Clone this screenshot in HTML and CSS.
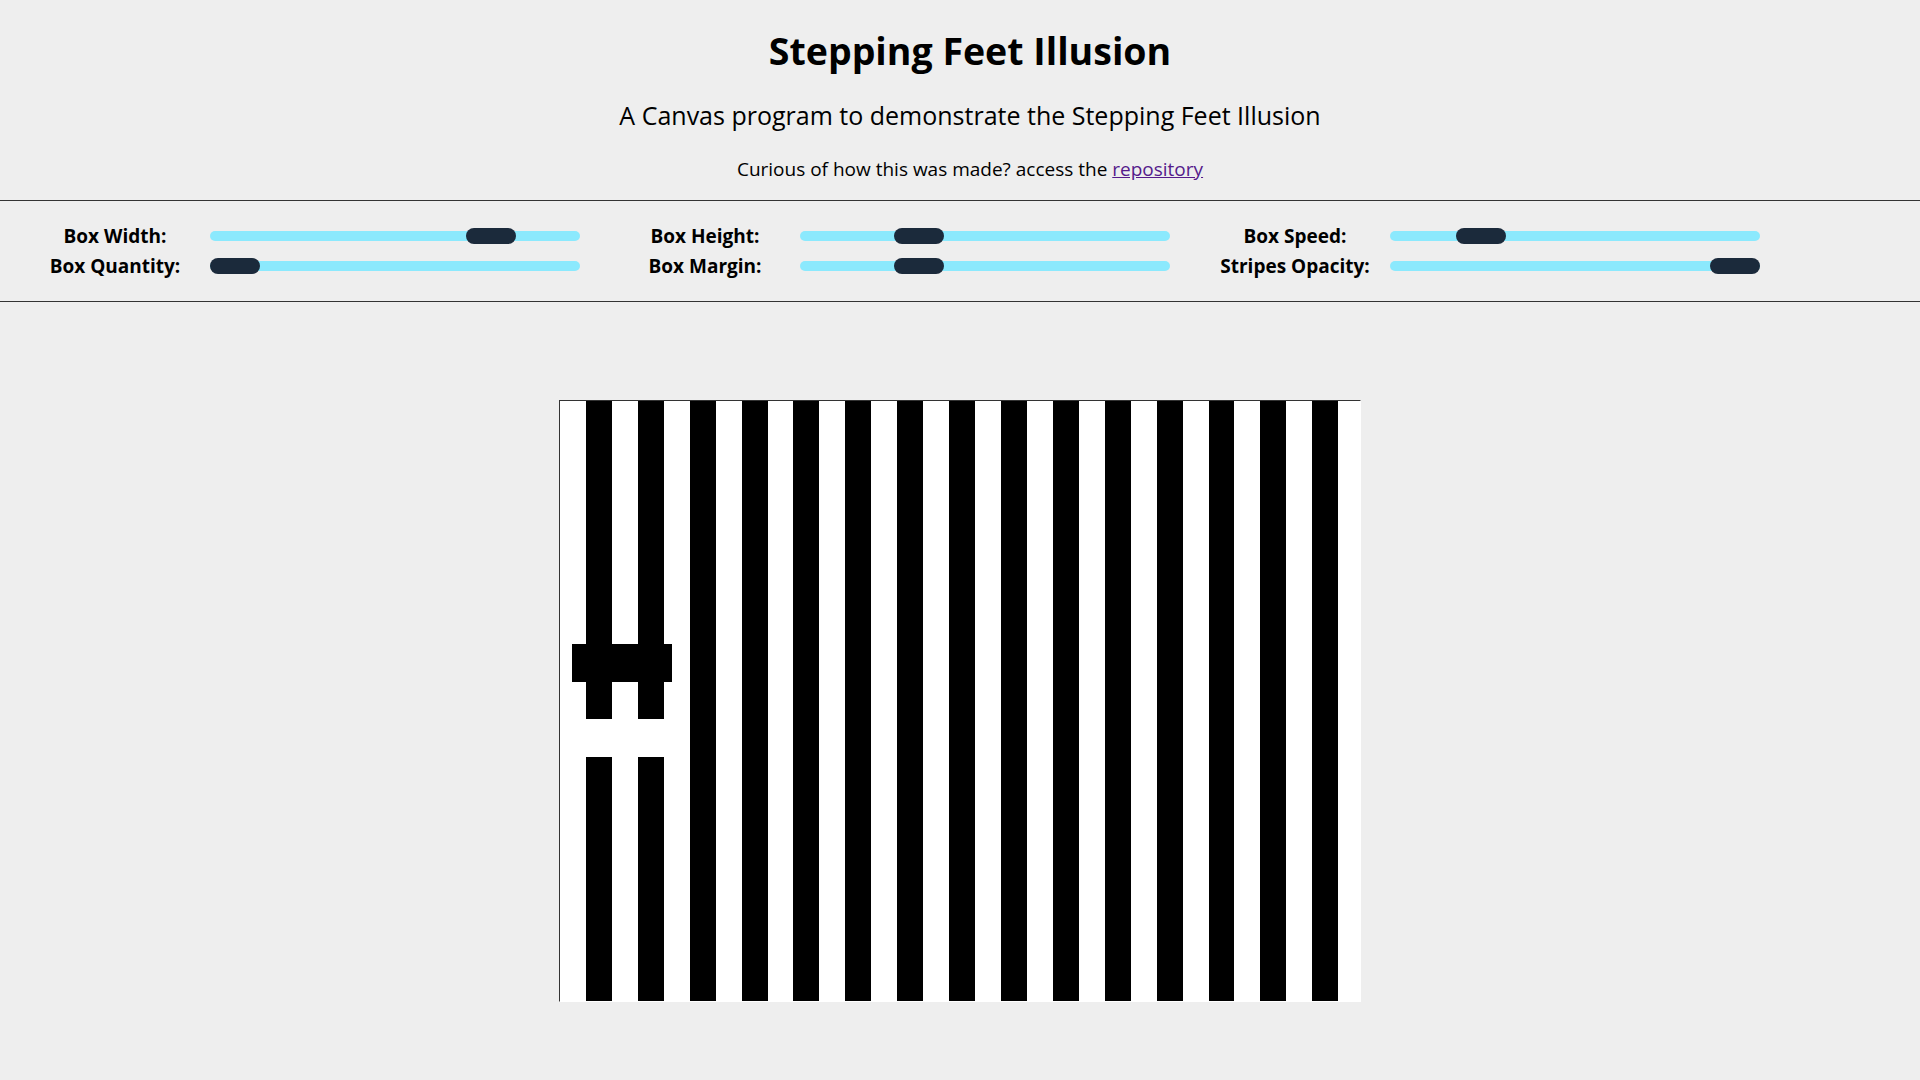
FILE: index.html
```html
<!DOCTYPE html>
<html lang="en">
<head>
<meta charset="utf-8">
<title>Stepping Feet Illusion</title>
<link rel="stylesheet" href="styles.css">
</head>
<body>
<header class="header">
  <h1 class="title">Stepping Feet Illusion</h1>
  <p class="subtitle">A Canvas program to demonstrate the Stepping Feet Illusion</p>
  <p class="note">Curious of how this was made? access the <a class="repo-link" href="#">repository</a></p>
</header>
<section class="controls">
  <div class="group">
    <label class="ctl-label">Box Width:</label>
    <input class="slider" type="range" min="0" max="100" step="any" value="80">
    <label class="ctl-label">Box Quantity:</label>
    <input class="slider" type="range" min="0" max="100" step="any" value="0">
  </div>
  <div class="group">
    <label class="ctl-label">Box Height:</label>
    <input class="slider" type="range" min="0" max="100" step="any" value="29.5">
    <label class="ctl-label">Box Margin:</label>
    <input class="slider" type="range" min="0" max="100" step="any" value="29.5">
  </div>
  <div class="group">
    <label class="ctl-label">Box Speed:</label>
    <input class="slider" type="range" min="0" max="100" step="any" value="20.7">
    <label class="ctl-label">Stripes Opacity:</label>
    <input class="slider" type="range" min="0" max="100" step="any" value="100">
  </div>
</section>
<main class="stage">
  <div class="canvas">
    <div class="foot foot-dark"></div>
    <div class="foot foot-light"></div>
  </div>
</main>
</body>
</html>
```
FILE: styles.css
```css
html, body {
  margin: 0;
  padding: 0;
}
body {
  background: #eeeeee;
  color: #000;
  font-family: "Trebuchet MS", "Open Sans", sans-serif;
}
.header {
  text-align: center;
  padding: 27px 0 0 20px;
}
.title {
  margin: 0;
  font-size: 37.5px;
  line-height: 48px;
  font-weight: 700;
}
.subtitle {
  margin: 25px 0 0;
  font-size: 25px;
  line-height: 30px;
}
.note {
  margin: 27px 0 0;
  font-size: 19px;
  line-height: 24px;
}
.repo-link {
  color: #551a8b;
  text-decoration: underline;
}
.controls {
  margin-top: 19px;
  border-top: 1px solid #333;
  border-bottom: 1px solid #333;
  display: flex;
  gap: 30px;
  padding: 20px 0 20px 20px;
}
.group {
  display: grid;
  grid-template-columns: 190px 370px;
  grid-auto-rows: 30px;
  align-items: center;
}
.ctl-label {
  text-align: center;
  font-weight: 700;
  font-size: 19px;
}
.slider {
  -webkit-appearance: none;
  appearance: none;
  width: 370px;
  height: 16px;
  margin: 0;
  padding: 0;
  background: transparent;
}
.slider::-webkit-slider-runnable-track {
  height: 10px;
  background: #8be9fd;
  border-radius: 5px;
}
.slider::-webkit-slider-thumb {
  -webkit-appearance: none;
  appearance: none;
  width: 50px;
  height: 16px;
  margin-top: -3px;
  border-radius: 8px;
  background: #1b2a3b;
  border: 0;
}
.stage {
  display: flex;
  justify-content: center;
  padding-top: 98px;
}
.canvas {
  position: relative;
  width: 800px;
  height: 600px;
  border: 1px solid;
  border-color: #333 #fff #fff #333;
  background: repeating-linear-gradient(to right, #fff 0 25.94px, #000 25.94px 51.88px);
}
.foot {
  position: absolute;
  left: 12px;
  width: 100px;
  height: 38px;
}
.foot-dark {
  top: 243px;
  background: #000;
}
.foot-light {
  top: 318px;
  background: #fff;
}
```
